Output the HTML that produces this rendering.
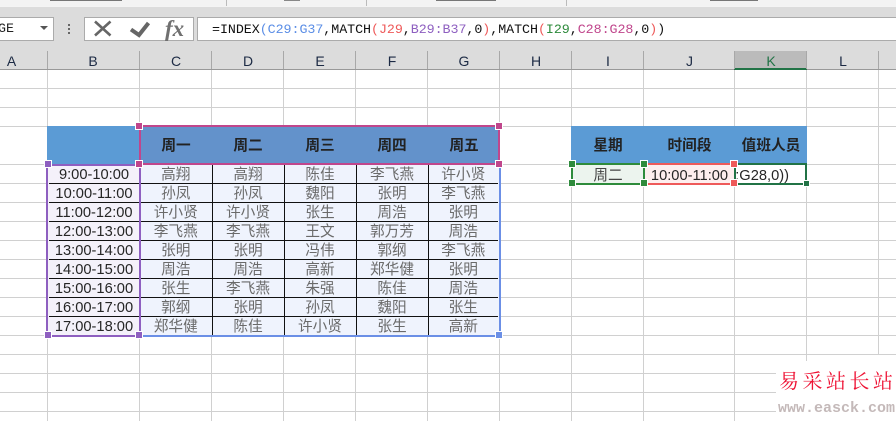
<!DOCTYPE html>
<html><head><meta charset="utf-8">
<style>
html,body{margin:0;padding:0;background:#fff}
#p{position:relative;width:896px;height:421px;overflow:hidden;background:#fff;font-family:"Liberation Sans","Noto Sans CJK SC",sans-serif}
#p div,#p span.a{position:absolute}
.v{width:1px;background:#d0d0d0;top:70px;height:351px}
.h{height:1px;background:#d0d0d0;left:0;width:896px}
.s{width:1px;background:#a8a8a8;top:51px;height:18px}
.c{top:52px;height:17px;line-height:18px;font-size:14px;text-align:center;color:#1c2a44}
table{position:absolute;border-collapse:collapse;table-layout:fixed;font-size:14.67px}
td{padding:2px 0 0 0;text-align:center;height:16px;line-height:16px;border-bottom:1px solid #111;border-right:1px solid #111;color:#6a6a6a;white-space:nowrap;overflow:hidden}
tr:last-child td{border-bottom:none}
td:last-child{border-right:none}
.t td{color:#262626;border-right:none}
.th{font-weight:bold;font-size:14.67px;color:#222;text-align:center;line-height:20px}
.hd{width:6px;height:6px}
</style></head><body><div id="p">

<!-- top -->
<div style="left:0;top:0;width:896px;height:6px;background:#f3f3f3"></div>
<div style="left:50px;top:0;width:72px;height:1px;background:#777"></div>
<div style="left:284px;top:0;width:16px;height:1px;background:#888"></div>
<div style="left:436px;top:0;width:60px;height:1px;background:#777"></div>
<div style="left:710px;top:0;width:48px;height:1px;background:#777"></div>
<div style="left:226px;top:0;width:1px;height:6px;background:#bbb"></div>
<div style="left:366px;top:0;width:1px;height:6px;background:#bbb"></div>
<div style="left:566px;top:0;width:1px;height:6px;background:#bbb"></div>
<div style="left:0;top:6px;width:896px;height:63px;background:#dcdcdc"></div>
<div style="left:0;top:6px;width:896px;height:1px;background:#f4f4f4"></div>

<!-- name box -->
<div style="left:-2px;top:17px;width:54px;height:22px;background:#fff;border:1px solid #ababab;font:13.33px/24px 'Liberation Mono',monospace;color:#222;text-indent:-1px;overflow:hidden">GE</div>
<div style="left:40px;top:26px;width:0;height:0;border-left:4px solid transparent;border-right:4px solid transparent;border-top:4px solid #555"></div>
<div style="left:68px;top:24px;width:2px;height:2px;background:#666"></div>
<div style="left:68px;top:28px;width:2px;height:2px;background:#666"></div>
<div style="left:68px;top:32px;width:2px;height:2px;background:#666"></div>

<!-- fx box -->
<div style="left:84px;top:17px;width:108px;height:22px;background:#fff;border:1px solid #ababab"></div>
<svg style="position:absolute;left:84px;top:17px" width="110" height="24">
<path d="M11 4.5 L26.5 18.5 M26.5 4.5 L11 18.5" stroke="#666" stroke-width="2.6" fill="none"/>
<path d="M47 12.5 L55 18 L64.5 6" stroke="#666" stroke-width="4" fill="none"/>
</svg>
<span class="a" style="left:165px;top:14px;font:italic bold 23px/30px 'Liberation Serif',serif;color:#707070">fx</span>

<!-- formula -->
<div style="left:197px;top:17px;width:700px;height:22px;background:#fff;border:1px solid #ababab;border-right:none"></div>
<div style="left:212px;top:21px;font:13.33px/20px 'Liberation Mono',monospace;letter-spacing:-0.05px;color:#111;white-space:pre">=INDEX<span style="color:#5b8ee6">(C29:G37</span>,MATCH<span style="color:#ee5a5a">(J29</span>,<span style="color:#8e5fc0">B29:B37</span>,0<span style="color:#ee5a5a">)</span>,MATCH<span style="color:#ee5a5a">(</span><span style="color:#2e8b3c">I29</span>,<span style="color:#c0468c">C28:G28</span>,0<span style="color:#ee5a5a">)</span>)</div>

<!-- column header -->
<div style="left:734px;top:51px;width:73px;height:18px;background:#bbbbbb"></div>
<div style="left:0;top:69px;width:896px;height:1px;background:#999"></div>
<div style="left:734px;top:68px;width:73px;height:2px;background:#217346"></div>
<div class="s" style="left:47px"></div><div class="s" style="left:139px"></div><div class="s" style="left:211px"></div><div class="s" style="left:283px"></div><div class="s" style="left:355px"></div><div class="s" style="left:427px"></div><div class="s" style="left:499px"></div><div class="s" style="left:571px"></div><div class="s" style="left:643px"></div><div class="s" style="left:734px"></div><div class="s" style="left:806px"></div><div class="s" style="left:878px"></div>
<div class="c" style="left:-12px;width:47px">A</div>
<div class="c" style="left:47px;width:92px">B</div>
<div class="c" style="left:140px;width:72px">C</div>
<div class="c" style="left:212px;width:72px">D</div>
<div class="c" style="left:284px;width:72px">E</div>
<div class="c" style="left:356px;width:72px">F</div>
<div class="c" style="left:428px;width:72px">G</div>
<div class="c" style="left:500px;width:72px">H</div>
<div class="c" style="left:572px;width:72px">I</div>
<div class="c" style="left:644px;width:91px">J</div>
<div class="c" style="left:735px;width:72px;color:#217346">K</div>
<div class="c" style="left:807px;width:72px">L</div>

<!-- grid -->
<div class="v" style="left:47px"></div><div class="v" style="left:139px"></div><div class="v" style="left:211px"></div><div class="v" style="left:283px"></div><div class="v" style="left:355px"></div><div class="v" style="left:427px"></div><div class="v" style="left:499px"></div><div class="v" style="left:571px"></div><div class="v" style="left:643px"></div><div class="v" style="left:734px"></div><div class="v" style="left:806px"></div><div class="v" style="left:878px"></div>
<div class="h" style="top:88px"></div><div class="h" style="top:107px"></div><div class="h" style="top:126px"></div><div class="h" style="top:164px"></div><div class="h" style="top:183px"></div><div class="h" style="top:202px"></div><div class="h" style="top:221px"></div><div class="h" style="top:240px"></div><div class="h" style="top:259px"></div><div class="h" style="top:278px"></div><div class="h" style="top:297px"></div><div class="h" style="top:316px"></div><div class="h" style="top:335px"></div><div class="h" style="top:354px"></div><div class="h" style="top:373px"></div><div class="h" style="top:392px"></div><div class="h" style="top:411px"></div>

<!-- left table headers -->
<div style="left:47px;top:126px;width:92px;height:38px;background:#5b9bd5"></div>
<div style="left:140px;top:127px;width:359px;height:37px;background:#6392cb"></div>
<div class="th" style="left:140px;top:136px;width:72px">周一</div>
<div class="th" style="left:212px;top:136px;width:72px">周二</div>
<div class="th" style="left:284px;top:136px;width:72px">周三</div>
<div class="th" style="left:356px;top:136px;width:72px">周四</div>
<div class="th" style="left:428px;top:136px;width:72px">周五</div>

<!-- backgrounds -->
<div style="left:48px;top:165px;width:91px;height:170px;background:#f4f1fa"></div>
<div style="left:140px;top:165px;width:359px;height:170px;background:#eff3fd"></div>

<table class="t" style="left:49px;top:165px;width:90px"><colgroup><col style="width:90px"></colgroup>
<tr><td>9:00-10:00</td></tr><tr><td>10:00-11:00</td></tr><tr><td>11:00-12:00</td></tr><tr><td>12:00-13:00</td></tr><tr><td>13:00-14:00</td></tr><tr><td>14:00-15:00</td></tr><tr><td>15:00-16:00</td></tr><tr><td>16:00-17:00</td></tr><tr><td>17:00-18:00</td></tr>
</table>
<table style="left:140px;top:165px;width:358px"><colgroup><col style="width:72px"><col style="width:72px"><col style="width:72px"><col style="width:72px"><col style="width:70px"></colgroup>
<tr><td>高翔</td><td>高翔</td><td>陈佳</td><td>李飞燕</td><td>许小贤</td></tr>
<tr><td>孙凤</td><td>孙凤</td><td>魏阳</td><td>张明</td><td>李飞燕</td></tr>
<tr><td>许小贤</td><td>许小贤</td><td>张生</td><td>周浩</td><td>张明</td></tr>
<tr><td>李飞燕</td><td>李飞燕</td><td>王文</td><td>郭万芳</td><td>周浩</td></tr>
<tr><td>张明</td><td>张明</td><td>冯伟</td><td>郭纲</td><td>李飞燕</td></tr>
<tr><td>周浩</td><td>周浩</td><td>高新</td><td>郑华健</td><td>张明</td></tr>
<tr><td>张生</td><td>李飞燕</td><td>朱强</td><td>陈佳</td><td>周浩</td></tr>
<tr><td>郭纲</td><td>张明</td><td>孙凤</td><td>魏阳</td><td>张生</td></tr>
<tr><td>郑华健</td><td>陈佳</td><td>许小贤</td><td>张生</td><td>高新</td></tr>
</table>

<!-- range borders -->
<div style="left:139px;top:335px;width:361px;height:2px;background:#6b8fe6"></div>
<div style="left:499px;top:165px;width:2px;height:171px;background:#6b8fe6"></div>
<div style="left:46px;top:164px;width:2px;height:172px;background:#8e5fc0"></div>
<div style="left:139px;top:164px;width:2px;height:172px;background:#8e5fc0"></div>
<div style="left:47px;top:335px;width:93px;height:2px;background:#8e5fc0"></div>
<div style="left:47px;top:164px;width:93px;height:2px;background:#8e5fc0"></div>
<div style="left:139px;top:125px;width:360px;height:2px;background:#c0468c"></div>
<div style="left:139px;top:163px;width:360px;height:2px;background:#c0468c"></div>
<div style="left:139px;top:126px;width:2px;height:38px;background:#c0468c"></div>
<div style="left:498px;top:126px;width:2px;height:38px;background:#c0468c"></div>
<!-- handles -->
<div class="hd" style="left:136px;top:123px;background:#c0468c;outline:1px solid #fff"></div>
<div class="hd" style="left:496px;top:123px;background:#c0468c;outline:1px solid #fff"></div>
<div class="hd" style="left:136px;top:161px;background:#c0468c;outline:1px solid #fff"></div>
<div class="hd" style="left:496px;top:161px;background:#c0468c;outline:1px solid #fff"></div>
<div class="hd" style="left:45px;top:161px;background:#8e5fc0;outline:1px solid #fff"></div>
<div class="hd" style="left:45px;top:332px;background:#8e5fc0;outline:1px solid #fff"></div>
<div class="hd" style="left:136px;top:332px;background:#8e5fc0;outline:1px solid #fff"></div>
<div class="hd" style="left:496px;top:332px;background:#6b8fe6;outline:1px solid #fff"></div>

<!-- right table -->
<div style="left:571px;top:126px;width:236px;height:38px;background:#5b9bd5"></div>
<div class="th" style="left:572px;top:136px;width:72px">星期</div>
<div class="th" style="left:644px;top:136px;width:91px">时间段</div>
<div class="th" style="left:735px;top:136px;width:72px">值班人员</div>
<div style="left:571px;top:164px;width:73px;height:21px;background:#ecf4ee"></div>
<div style="left:644px;top:164px;width:91px;height:21px;background:#fdeeee"></div>
<div style="left:572px;top:166px;width:72px;height:19px;line-height:20px;text-align:center;font-size:14.67px;color:#444">周二</div>
<div style="left:644px;top:166px;width:91px;height:19px;line-height:20px;text-align:center;font-size:14.67px;color:#262626">10:00-11:00</div>
<div style="left:734px;top:163px;width:2px;height:22px;background:#217346"></div>
<div style="left:736px;top:166px;width:53px;height:19px;line-height:20px;font-size:14.67px;color:#262626;overflow:hidden;white-space:nowrap"><span style="position:absolute;right:0;top:0">:G28,0))</span></div>
<div style="left:571px;top:163px;width:2px;height:22px;background:#2e8b3c"></div>
<div style="left:643px;top:163px;width:2px;height:22px;background:#2e8b3c"></div>
<div style="left:571px;top:163px;width:73px;height:2px;background:#2e8b3c"></div>
<div style="left:571px;top:183px;width:73px;height:2px;background:#2e8b3c"></div>
<div style="left:644px;top:163px;width:91px;height:2px;background:#ee5a5a"></div>
<div style="left:644px;top:183px;width:91px;height:2px;background:#ee5a5a"></div>
<div style="left:735px;top:163px;width:72px;height:2px;background:#217346"></div>
<div style="left:735px;top:183px;width:72px;height:2px;background:#217346"></div>
<div style="left:805px;top:163px;width:2px;height:22px;background:#217346"></div>
<div class="hd" style="left:569px;top:161px;background:#2e8b3c;outline:1px solid #fff"></div>
<div class="hd" style="left:569px;top:180px;background:#2e8b3c;outline:1px solid #fff"></div>
<div class="hd" style="left:641px;top:161px;background:#2e8b3c;outline:1px solid #fff"></div>
<div class="hd" style="left:641px;top:180px;background:#2e8b3c;outline:1px solid #fff"></div>
<div class="hd" style="left:731px;top:161px;background:#ee5a5a;outline:1px solid #fff"></div>
<div class="hd" style="left:731px;top:180px;background:#ee5a5a;outline:1px solid #fff"></div>
<div style="left:804px;top:181px;width:5px;height:5px;background:#217346;outline:1px solid #fff"></div>

<!-- watermark -->
<div style="left:776px;top:355px;width:120px;height:66px;background:#fff"></div>
<div style="left:806px;top:355px;width:1px;height:6px;background:#d0d0d0"></div>
<div style="left:779px;top:367px;width:117px;font:20px/25px 'Noto Serif CJK SC','Liberation Serif',serif;color:#ee1133;letter-spacing:3.5px;white-space:nowrap">易采站长站</div>
<div style="left:778px;top:400px;font:bold 15px/17px 'Liberation Mono',monospace;color:#c4b9b9;white-space:nowrap">www.easck.com</div>
</div></body></html>
